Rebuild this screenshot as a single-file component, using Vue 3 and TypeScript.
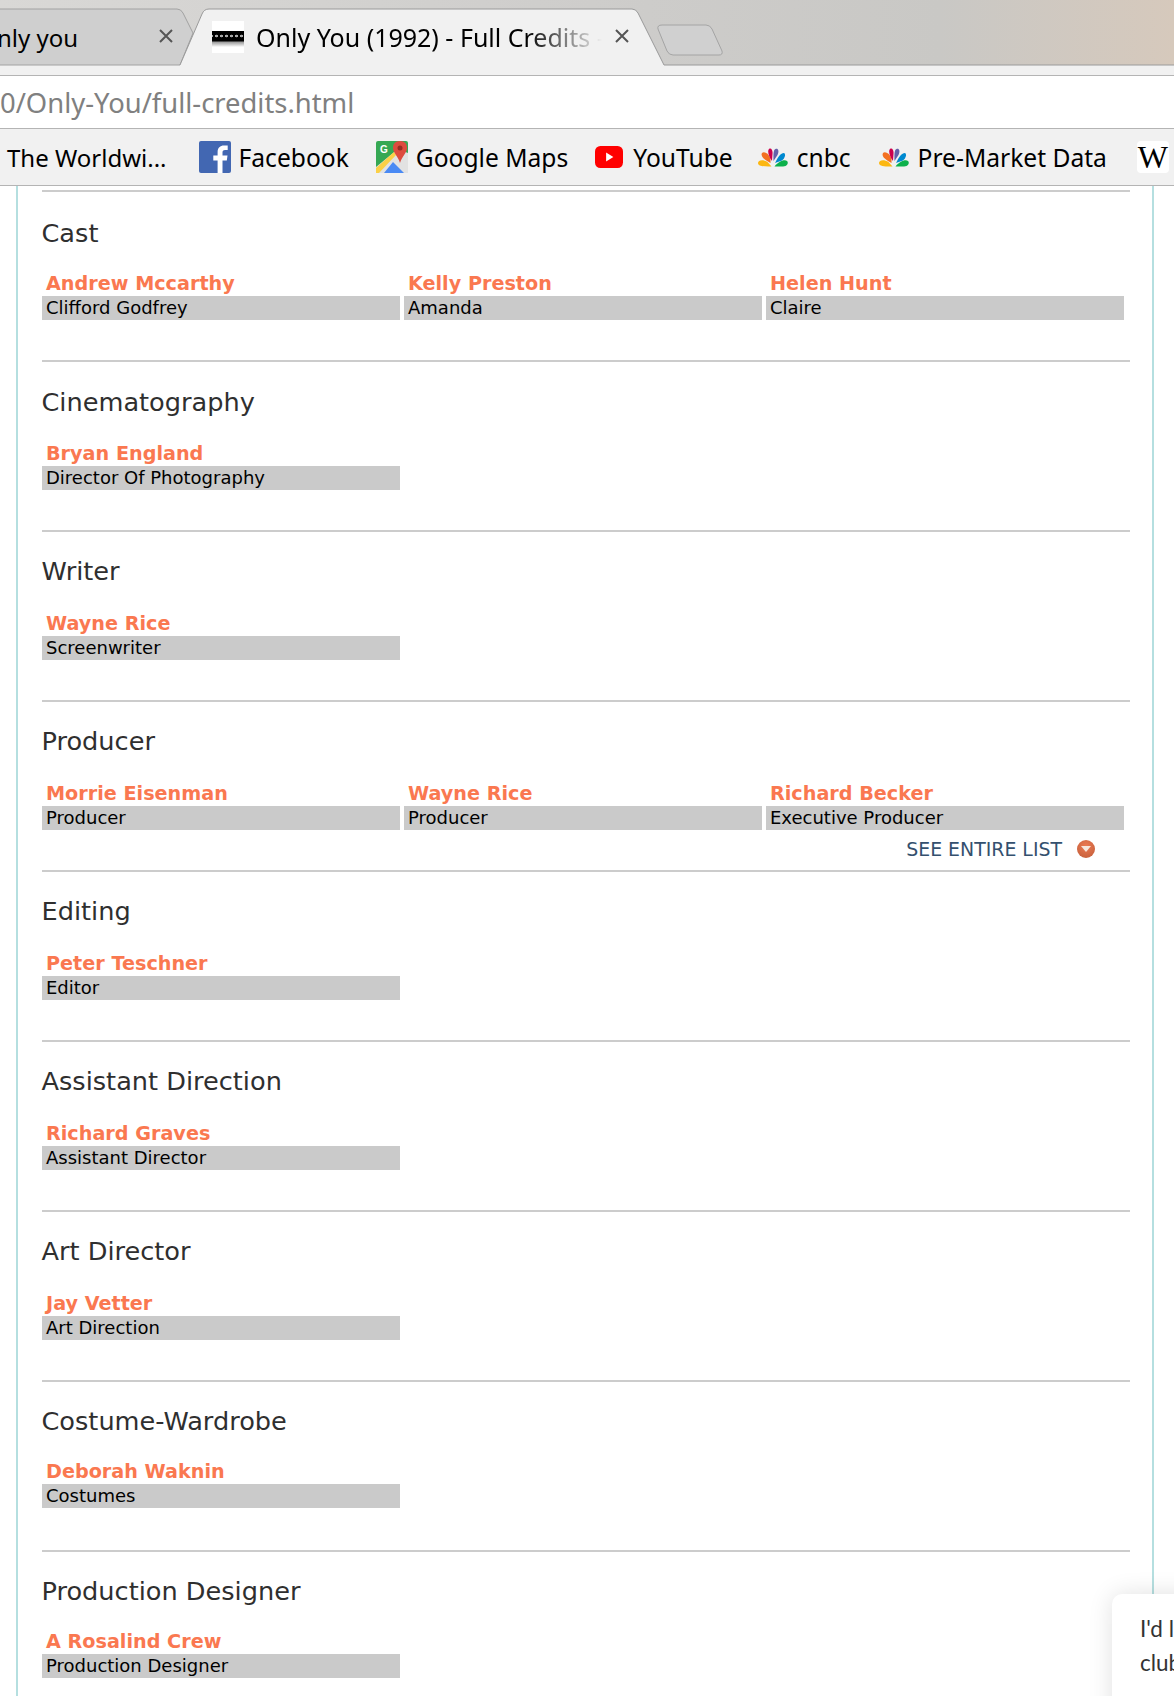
<script setup lang="ts">
interface Credit { name: string; role: string }
interface Section { title: string; credits: Credit[]; more?: boolean; kind?: string }

const sections: Section[] = [
  { title: 'Cast', kind: 'lead', credits: [
    { name: 'Andrew Mccarthy', role: 'Clifford Godfrey' },
    { name: 'Kelly Preston', role: 'Amanda' },
    { name: 'Helen Hunt', role: 'Claire' } ] },
  { title: 'Cinematography', kind: 'second', credits: [{ name: 'Bryan England', role: 'Director Of Photography' }] },
  { title: 'Writer', credits: [{ name: 'Wayne Rice', role: 'Screenwriter' }] },
  { title: 'Producer', more: true, credits: [
    { name: 'Morrie Eisenman', role: 'Producer' },
    { name: 'Wayne Rice', role: 'Producer' },
    { name: 'Richard Becker', role: 'Executive Producer' } ] },
  { title: 'Editing', credits: [{ name: 'Peter Teschner', role: 'Editor' }] },
  { title: 'Assistant Direction', credits: [{ name: 'Richard Graves', role: 'Assistant Director' }] },
  { title: 'Art Director', credits: [{ name: 'Jay Vetter', role: 'Art Direction' }] },
  { title: 'Costume-Wardrobe', kind: 'compact', credits: [{ name: 'Deborah Waknin', role: 'Costumes' }] },
  { title: 'Production Designer', kind: 'compact', credits: [{ name: 'A Rosalind Crew', role: 'Production Designer' }] },
]
const petals = [
  { d: 'M14.500 18.500 C10 18.500 1 19 1 15 C1 12 6 11 10.500 14 Z', c: '#fcb711' },
  { d: 'M13.500 15 C9 12.500 3 9 5 5 C7 3 11.500 5 13.500 10.500 Z', c: '#f37021' },
  { d: 'M15 13 C12 9 10 3 12 1 C14 -0.500 16 2 15.500 6 Z', c: '#cc004c' },
  { d: 'M16.500 13 C16.500 8 16 2 18.500 1 C21 0 22.500 3 20.500 7 Z', c: '#6460aa' },
  { d: 'M18 15 C20 11 23 5 27 5 C29 6 28 10 25 12.500 Z', c: '#0089d0' },
  { d: 'M17.500 18.500 C21 14 27 11 30 13 C32 15 30 18.500 26 18.500 Z', c: '#0db14b' },
]
</script>

<template>
  <div class="page">
    <header class="chrome">
      <div class="strip">
        <svg class="strip-art" width="1174" height="75" viewBox="0 0 1174 75" aria-hidden="true">
          <rect y="65" width="1174" height="10" fill="#f1f1f1" />
          <path d="M-5 9 H177 Q181 9 183 13 L193 33 L180 65 H-5 Z" fill="#cfcfcf" stroke="#a2a2a2" />
          <path d="M180 65 L202 14 Q204 9 209 9 H632 Q636 9 638 13 L664 65 H664 L180 65 Z" fill="#f1f1f1" />
          <path d="M180 65 L202 14 Q204 9 209 9 H632 Q636 9 638 13 L664 65 H1174" fill="none" stroke="#9a9a9a" />
          <path d="M662 25 H706 Q710 25 712 29 L722 51 Q723 55 719 55 H673 Q669 55 667 51 L658 29 Q657 25 662 25 Z" fill="#d0d0d0" stroke="#a4a4a4" />
        </svg>
        <div class="tab tab-back">
          <span class="tab-title back-title">nly you</span>
          <svg class="close" width="14" height="14" viewBox="0 0 14 14"><path d="M1 1 L13 13 M13 1 L1 13" stroke="#555" stroke-width="2" fill="none" /></svg>
        </div>
        <div class="tab tab-front">
          <span class="favicon"><i></i></span>
          <span class="tab-title front-title">Only You (1992) - Full Credits - IMDb</span>
          <svg class="close" width="14" height="14" viewBox="0 0 14 14"><path d="M1 1 L13 13 M13 1 L1 13" stroke="#555" stroke-width="2" fill="none" /></svg>
        </div>
      </div>
      <div class="address">0/Only-You/full-credits.html</div>
      <nav class="bookmarks">
        <span class="bm bm-first">The Worldwi...</span>
        <span class="bm bm-wide">
          <svg width="32" height="32" viewBox="0 0 32 32"><rect width="32" height="32" rx="2" fill="#4267b2" /><path transform="translate(1.500 0)" d="M22 32 V19.500 H26.300 L27 14.600 H22 V11.500 C22 10 22.500 9 24.600 9 H27.200 V4.600 C26.700 4.500 25.200 4.400 23.400 4.400 C19.700 4.400 17.100 6.700 17.100 10.900 V14.600 H12.800 V19.500 H17.100 V32 Z" fill="#fff" /></svg>
          Facebook
        </span>
        <span class="bm bm-wide">
          <svg width="32" height="32" viewBox="0 0 32 32">
            <rect width="32" height="32" rx="2" fill="#35a853" />
            <path d="M0 32 V26 L22 8 L32 12 V32 Z" fill="#e2e2e2" />
            <path d="M8 32 L17 21 L28 32 Z" fill="#4a8af4" />
            <path d="M0 32 V27 L18 11 L20 14 L3 32 Z" fill="#fbd047" />
            <path d="M24 0 C19 0 17 3 17 7 C17 12 22 15 24 22 C26 15 31 12 31 7 C31 3 29 0 24 0 Z" fill="#dd4b3e" />
            <circle cx="24" cy="7" r="2.500" fill="#962c22" />
            <text x="4" y="12" class="g-mark">G</text>
          </svg>
          Google Maps
        </span>
        <span class="bm bm-yt">
          <svg width="28" height="22" viewBox="0 0 29 22" preserveAspectRatio="none"><rect width="29" height="22" rx="5.500" fill="#f00" /><path d="M11.500 6.500 L19 11 L11.500 15.500 Z" fill="#fff" /></svg>
          YouTube
        </span>
        <span class="bm bm-wide">
          <svg width="32" height="19" viewBox="0 0 32 19"><path v-for="p in petals" :key="p.c" :d="p.d" :fill="p.c" /></svg>
          cnbc
        </span>
        <span class="bm bm-last">
          <svg width="32" height="19" viewBox="0 0 32 19"><path v-for="p in petals" :key="p.c" :d="p.d" :fill="p.c" /></svg>
          Pre-Market Data
        </span>
        <span class="wiki">W</span>
      </nav>
    </header>

    <main class="content">
      <section v-for="s in sections" :key="s.title" class="section" :class="s.kind">
        <h2 class="heading">{{ s.title }}</h2>
        <div class="grid">
          <div v-for="c in s.credits" :key="c.name" class="credit">
            <a class="name">{{ c.name }}</a>
            <div class="role">{{ c.role }}</div>
          </div>
        </div>
        <div v-if="s.more" class="more">
          SEE ENTIRE LIST
          <span class="more-dot"></span>
        </div>
      </section>
    </main>

    <aside class="chat">I'd like to join the<br />club</aside>
  </div>
</template>

<style>
html, body { margin: 0; background: #fff; overflow: hidden; }
</style>

<style scoped>
.page {
  position: relative;
  width: 1174px;
  height: 1696px;
  overflow: hidden;
  background: #fff;
  font-family: "DejaVu Sans", Verdana, sans-serif;
}
.chrome { font-family: "Noto Sans", "Open Sans", sans-serif; color: #000; }
.strip {
  position: relative;
  display: flex;
  height: 76px;
  background: linear-gradient(90deg, #d9d8d6 0%, #cdccca 55%, #c9c8c5 80%, #d6c9bc 100%);
  box-sizing: border-box;
  border-bottom: 1px solid #b4b4b4;
}
.strip-art { position: absolute; left: 0; top: 0; }
.tab { position: relative; display: flex; align-items: center; height: 56px; margin-top: 9px; font-size: 25px; }
.tab-back { width: 180px; font-size: 24px; }
.back-title { margin-left: -3px; width: 150px; }
.tab-back .close { margin-left: 12px; }
.tab-front { width: 460px; margin-left: 32px; }
.favicon {
  display: block;
  width: 32px;
  height: 32px;
  background: #fff;
  flex: none;
}
.favicon i {
  display: block;
  width: 32px;
  height: 16px;
  margin-top: 10px;
  background:
    radial-gradient(circle, #aaa 1.200px, transparent 1.600px) 2px 1px / 5px 8px repeat-x,
    linear-gradient(#000 0, #000 10px, #999 11px, #fff 16px);
}
.tab-title { white-space: nowrap; overflow: hidden; }
.front-title {
  width: 346px;
  margin-left: 12px;
  -webkit-mask-image: linear-gradient(90deg, #000 78%, transparent 100%);
  mask-image: linear-gradient(90deg, #000 78%, transparent 100%);
  flex: none;
}
.close { flex: none; margin-left: 13px; margin-top: -2px; }
.address {
  height: 52px;
  line-height: 54px;
  background: #fff;
  border-bottom: 1px solid #b4b4b4;
  font-size: 27.400px;
  color: #808080;
  white-space: nowrap;
}
.bookmarks {
  display: flex;
  align-items: center;
  height: 57px;
  padding-left: 7px;
  box-sizing: border-box;
  background: #f1f1f1;
  border-bottom: 1px solid #b4b4b4;
  font-size: 24.600px;
  white-space: nowrap;
}
.bm { display: flex; align-items: center; gap: 8px; margin-right: 26px; }
.bm-first { margin-right: 32px; font-size: 24px; }
.bm-wide { margin-right: 27px; }
.bm-yt { gap: 10px; margin-right: 24px; }
.bm-last { margin-right: 30px; }
.wiki {
  width: 32px;
  height: 32px;
  background: #fff;
  border-radius: 4px;
  font: 32px/32px "Liberation Serif", serif;
  text-align: center;
}
.g-mark { font: 700 10px "Liberation Sans", sans-serif; fill: #fff; }
.content {
  margin-left: 16px;
  width: 1138px;
  box-sizing: border-box;
  border-left: 2px solid #b5dfe0;
  border-right: 2px solid #b5dfe0;
  padding: 4px 22px 0 24px;
}
.section {
  position: relative;
  height: 170px;
  box-sizing: border-box;
  border-top: 2px solid #ccc;
  padding-top: 24px;
}
.section.lead { padding-top: 26px; }
.section.second { padding-top: 25px; }
.heading { margin: 0 0 0 -0.500px; font-size: 25.600px; line-height: 30px; font-weight: 400; color: #2f2f2f; }
.grid {
  display: grid;
  grid-template-columns: repeat(3, 358px);
  gap: 4px;
  margin-top: 24px;
}
.lead .grid { margin-top: 22px; }
.second .grid { margin-top: 23px; }
.compact .grid { margin-top: 22px; }
.credit { min-width: 0; }
.name { display: block; padding: 2px 0 0 4px; font-size: 19.200px; line-height: 24px; font-weight: 700; color: #fa7850; }
.role { height: 24px; padding-left: 4px; background: #cacaca; font-size: 18px; line-height: 24px; color: #000; }
.more {
  position: absolute;
  right: 35px;
  top: 135px;
  display: flex;
  align-items: center;
  gap: 15px;
  font-size: 18.900px;
  line-height: 24px;
  color: #34506e;
}
.more-dot {
  position: relative;
  width: 18px;
  height: 18px;
  border-radius: 50%;
  background: radial-gradient(circle at 50% 35%, #ec7a52, #bf5c38);
}
.more-dot::after {
  content: "";
  position: absolute;
  left: 4px;
  top: 6px;
  border: 5px solid transparent;
  border-top: 6px solid #f6e6dc;
  border-bottom: 0;
}
.chat {
  position: absolute;
  left: 1112px;
  top: 1594px;
  width: 240px;
  height: 140px;
  box-sizing: border-box;
  padding: 18px 28px;
  background: #fff;
  border-radius: 10px;
  box-shadow: 0 0 24px rgba(0, 0, 0, 0.12);
  font-family: Lato, sans-serif;
  font-size: 22.500px;
  line-height: 34px;
  color: #333;
  white-space: nowrap;
}
</style>
